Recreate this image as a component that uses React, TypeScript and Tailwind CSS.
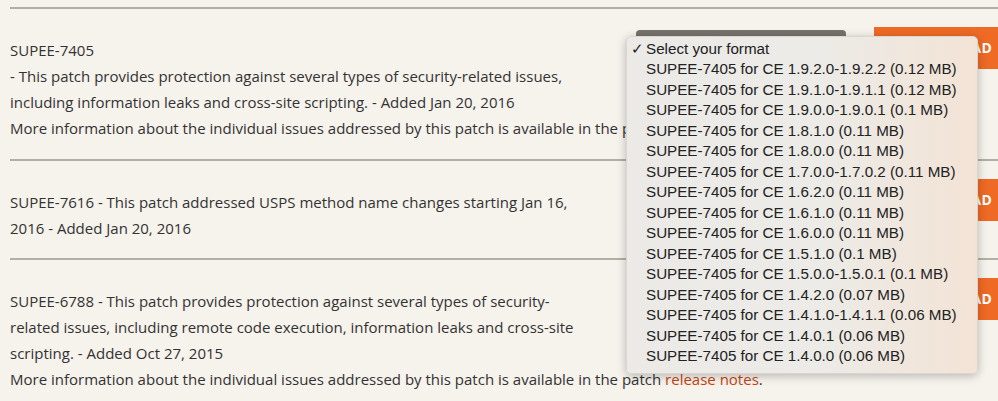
import React from 'react';

interface Patch {
  id: string;
  lines: React.ReactNode;
  more?: boolean;
}

const patches: Patch[] = [
  {
    id: 'SUPEE-7405',
    lines: (
      <>
        SUPEE-7405
        <br />- This patch provides protection against several types of security-related issues,
        including information leaks and cross-site scripting. - Added Jan 20, 2016
      </>
    ),
    more: true,
  },
  {
    id: 'SUPEE-7616',
    lines: <>SUPEE-7616 - This patch addressed USPS method name changes starting Jan 16, 2016 - Added Jan 20, 2016</>,
  },
  {
    id: 'SUPEE-6788',
    lines: (
      <>
        SUPEE-6788 - This patch provides protection against several types of security-related issues,
        including remote code execution, information leaks and cross-site scripting. - Added Oct 27, 2015
      </>
    ),
    more: true,
  },
];

const formats = [
  'SUPEE-7405 for CE 1.9.2.0-1.9.2.2 (0.12 MB)',
  'SUPEE-7405 for CE 1.9.1.0-1.9.1.1 (0.12 MB)',
  'SUPEE-7405 for CE 1.9.0.0-1.9.0.1 (0.1 MB)',
  'SUPEE-7405 for CE 1.8.1.0 (0.11 MB)',
  'SUPEE-7405 for CE 1.8.0.0 (0.11 MB)',
  'SUPEE-7405 for CE 1.7.0.0-1.7.0.2 (0.11 MB)',
  'SUPEE-7405 for CE 1.6.2.0 (0.11 MB)',
  'SUPEE-7405 for CE 1.6.1.0 (0.11 MB)',
  'SUPEE-7405 for CE 1.6.0.0 (0.11 MB)',
  'SUPEE-7405 for CE 1.5.1.0 (0.1 MB)',
  'SUPEE-7405 for CE 1.5.0.0-1.5.0.1 (0.1 MB)',
  'SUPEE-7405 for CE 1.4.2.0 (0.07 MB)',
  'SUPEE-7405 for CE 1.4.1.0-1.4.1.1 (0.06 MB)',
  'SUPEE-7405 for CE 1.4.0.1 (0.06 MB)',
  'SUPEE-7405 for CE 1.4.0.0 (0.06 MB)',
];

const App: React.FC = () => {
  return (
    <div className="relative w-[998px] h-[401px] overflow-hidden bg-[#f6f2ec] text-[#333] font-['Open_Sans',sans-serif] text-[15px] leading-[26px]">
      <div className="pl-[10px] pt-[7px]">
        {patches.map((p) => (
          <div key={p.id} className="border-t-2 border-[#b4afa5]">
            <div className="flex pt-[28px] pb-[17.5px]">
              <div className="w-[580px] shrink-0">
                <p>{p.lines}</p>
                {p.more && (
                  <p className="whitespace-nowrap w-0">
                    More information about the individual issues addressed by this patch is available in the patch{' '}
                    <a className="text-[#c4450f]">release notes</a>.
                  </p>
                )}
              </div>
              <div className="flex items-start ml-[46px] -mt-[10px]">
                <div className="w-[210px] h-[36px] mt-[3px] rounded-[4px] bg-[#77726b]" />
                <button className="ml-[28px] w-[148px] h-[42px] bg-[#ee6a25] text-white font-bold text-[14px] tracking-wide">
                  DOWNLOAD
                </button>
              </div>
            </div>
          </div>
        ))}
      </div>

      <div className="absolute left-[626px] top-[36px] w-[352px] pt-[2px] pb-[6px] rounded-[5px] shadow-[0_2px_10px_rgba(0,0,0,0.25)] border border-[#d9d6d0] bg-[linear-gradient(90deg,#ebeae7_0%,#ecebe7_55%,#f3e3d5_100%)] font-['Liberation_Sans',Arial,sans-serif] text-[15.2px] leading-[20.47px] text-[#222]">
        <div className="flex">
          <span className="w-[19px] pl-[4px] text-[15px]">✓</span>
          <span>Select your format</span>
        </div>
        {formats.map((f) => (
          <div key={f} className="pl-[19px]">
            {f}
          </div>
        ))}
      </div>
    </div>
  );
};

export default App;
